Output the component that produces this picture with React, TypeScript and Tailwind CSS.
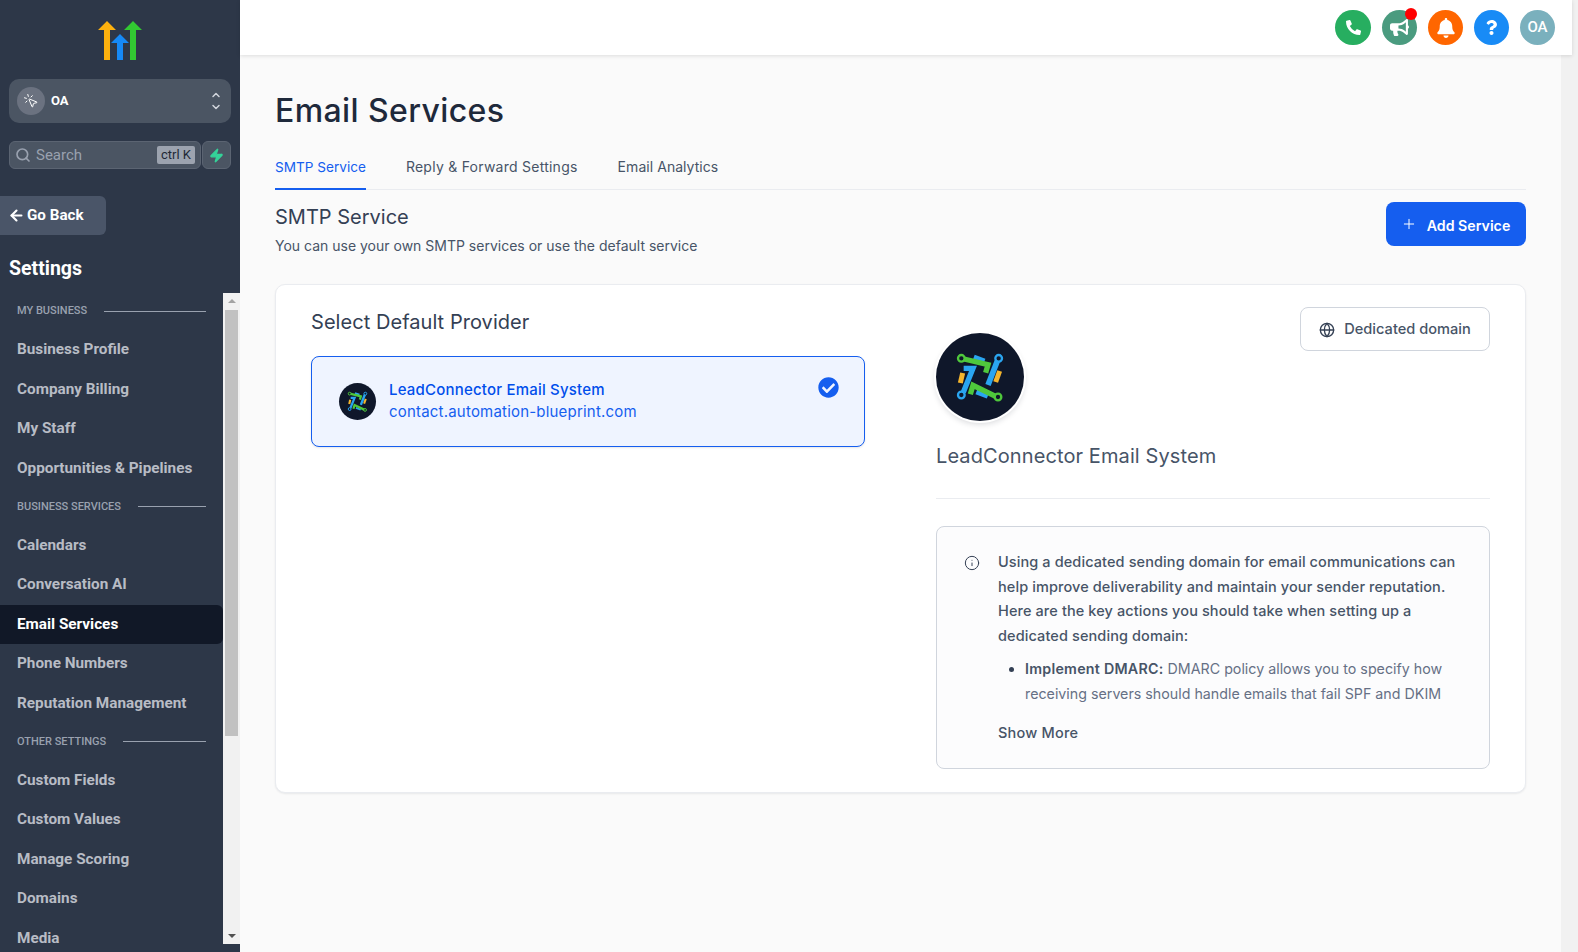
import React from 'react';
import { ArrowLeft, ChevronDown, ChevronUp, Globe, Info, MousePointerClick, Plus, Search, Zap } from 'lucide-react';
import { FaBell, FaBullhorn, FaCheckCircle, FaPhoneAlt, FaQuestion } from 'react-icons/fa';

const sections = [
  { title: 'MY BUSINESS', items: ['Business Profile', 'Company Billing', 'My Staff', 'Opportunities & Pipelines'] },
  { title: 'BUSINESS SERVICES', items: ['Calendars', 'Conversation AI', 'Email Services', 'Phone Numbers', 'Reputation Management'] },
  { title: 'OTHER SETTINGS', items: ['Custom Fields', 'Custom Values', 'Manage Scoring', 'Domains', 'Media'] },
];

function BrandLogo() {
  return (
    <svg width="46" height="42" viewBox="0 0 46 42">
      <path d="M1 10 L10 1 L19 10 H13 V40 H7 V10 Z" fill="#fdb10e" />
      <path d="M14 23 L23 14 L32 23 H26 V40 H20 V23 Z" fill="#1689f5" />
      <path d="M27 10 L36 1 L45 10 H39 V40 H33 V10 Z" fill="#32c832" />
    </svg>
  );
}

function ProviderLogo({ size }: { size: number }) {
  return (
    <svg width={size} height={size} viewBox="49 36 264 264" className="rounded-full bg-[#0f172a]">
      <g fill="none">
        <path d="M129 156 L122 186" stroke="#f5b52c" strokeWidth="15" />
        <path d="M240 150 L228 183" stroke="#f5b52c" strokeWidth="15" />
        <path d="M162 110 L194 122" stroke="#2aa5f0" strokeWidth="18" />
        <path d="M170 213 L204 226" stroke="#2aa5f0" strokeWidth="14" />
        <path d="M233 120 L205 192" stroke="#2aa5f0" strokeWidth="17" />
        <path d="M132 142 L160 142 L131 214" stroke="#2aa5f0" strokeWidth="16" />
        <path d="M133 114 L205 131 L198 155" stroke="#4fc83c" strokeWidth="16" />
        <path d="M228 226 L160 193 L152 220" stroke="#4fc83c" strokeWidth="16" />
        <circle cx="125" cy="112" r="10" stroke="#4fc83c" strokeWidth="7" />
        <circle cx="237" cy="112" r="10" stroke="#2aa5f0" strokeWidth="7" />
        <circle cx="125" cy="222" r="10" stroke="#2aa5f0" strokeWidth="7" />
        <circle cx="235" cy="228" r="10" stroke="#4fc83c" strokeWidth="7" />
      </g>
    </svg>
  );
}

function Sidebar() {
  return (
    <aside className="w-[240px] h-full shrink-0 bg-[#2d3748] flex flex-col font-['Roboto',sans-serif]">
      <div className="h-[79px] shrink-0 flex justify-center pt-[20px]">
        <BrandLogo />
      </div>
      <div className="mx-[9px] h-[44px] shrink-0 rounded-[10px] bg-[#4b5563] flex items-center pl-[8px] pr-[9px]">
        <div className="w-[28px] h-[28px] rounded-full bg-[#6b7280] flex items-center justify-center">
          <MousePointerClick size={16} strokeWidth={1.5} className="text-white" />
        </div>
        <span className="ml-[6px] text-[13px] font-bold text-white flex-1">OA</span>
        <div className="flex flex-col text-gray-300">
          <ChevronUp size={12} strokeWidth={3} />
          <ChevronDown size={12} strokeWidth={3} />
        </div>
      </div>
      <div className="mx-[9px] mt-[18px] h-[28px] shrink-0 flex gap-[1px]">
        <div className="w-[192px] rounded-[6px] bg-[#4b5563] border border-[#5b6472] flex items-center pl-[5px] pr-[5px]">
          <Search size={16} strokeWidth={2.5} className="text-gray-400" />
          <span className="ml-[5px] text-[15px] text-gray-400 flex-1">Search</span>
          <span className="h-[18px] px-[4px] rounded-[2px] bg-[#9ca3af] text-[13px] leading-[18px] text-[#1f2937]">ctrl K</span>
        </div>
        <div className="w-[29px] rounded-[6px] bg-[#4b5563] border border-[#5b6472] flex items-center justify-center">
          <Zap size={15} className="text-[#34d399]" fill="#34d399" />
        </div>
      </div>
      <div className="mt-[27px] w-[106px] h-[39px] shrink-0 rounded-r-[6px] bg-[#4a5568] flex items-center pl-[8px] text-white">
        <ArrowLeft size={17} strokeWidth={3} />
        <span className="ml-[2px] text-[15.2px] font-bold">Go Back</span>
      </div>
      <div className="mt-[19px] ml-[9px] h-[30px] shrink-0 text-[19.5px] font-bold leading-[30px] text-white">Settings</div>
      <div className="mt-[9px] h-[651px] shrink-0 flex overflow-hidden">
        <nav className="w-[223px] shrink-0">
          {sections.map((section, i) => (
            <div key={section.title}>
              <div className={`flex items-center pl-[17px] pr-[17px] gap-[17px] ${i === 0 ? 'h-[37px]' : 'h-[37.6px]'}`}>
                <span className="text-[11px] font-medium text-gray-400 whitespace-nowrap">{section.title}</span>
                <div className="flex-1 h-px bg-gray-400" />
              </div>
              {section.items.map((item) => (
                <div
                  key={item}
                  className={`h-[39.5px] flex items-center pl-[17px] text-[15.3px] font-bold rounded-r-[6px] ${
                    item === 'Email Services' ? 'bg-[#111827] text-white' : 'text-[#b8bcc5]'
                  }`}
                >
                  {item}
                </div>
              ))}
            </div>
          ))}
        </nav>
        <div className="w-[17px] h-full bg-[#f1f1f1] flex flex-col items-center justify-between">
          <div className="w-full flex flex-col items-center">
            <div className="mt-[6px] w-0 h-0 border-x-[4px] border-x-transparent border-b-[4px] border-b-[#a3a3a3]" />
            <div className="mt-[7px] w-[13px] h-[426px] bg-[#c1c1c1]" />
          </div>
          <div className="mb-[6px] w-0 h-0 border-x-[4px] border-x-transparent border-t-[4px] border-t-[#505050]" />
        </div>
      </div>
    </aside>
  );
}

function TopIcon({ className, children }: { className: string; children: React.ReactNode }) {
  return <div className={`relative w-[35px] h-[35px] rounded-full flex items-center justify-center text-white ${className}`}>{children}</div>;
}

function Header() {
  return (
    <header className="relative z-10 h-[55px] w-[1332px] shrink-0 bg-white shadow-[0_1px_4px_rgba(0,0,0,0.12)] flex items-center justify-end pr-[17px] gap-[11px] font-['Roboto',sans-serif]">
      <TopIcon className="w-[36px] bg-[#27ae60]"><FaPhoneAlt size={15} /></TopIcon>
      <TopIcon className="bg-[#4a9b7f]">
        <FaBullhorn size={19} />
        <span className="absolute -top-[2px] right-0 w-[12px] h-[12px] rounded-full bg-[#ff0000]" />
      </TopIcon>
      <TopIcon className="bg-[#ff6600]"><FaBell size={20} /></TopIcon>
      <TopIcon className="bg-[#188bf6]"><FaQuestion size={15} /></TopIcon>
      <TopIcon className="bg-[#7ab0bd] text-[15px] font-medium">OA</TopIcon>
    </header>
  );
}

function Content() {
  return (
    <main className="flex-1 bg-[#fafafa] pl-[35px] pr-[35px] font-['Inter',sans-serif] overflow-hidden">
      <h1 className="mt-[34px] text-[32px] leading-[44px] font-[450] tracking-[0.4px] text-[#1e293b]">Email Services</h1>
      <div className="mt-[13px] h-[44px] flex gap-[40px] border-b border-[#eaecf0] text-[14px] text-[#475467]">
        <div className="h-[44px] pt-[11px] border-b-2 border-[#155eef] text-[#155eef] text-[13.6px]">SMTP Service</div>
        <div className="pt-[10px] tracking-[0.25px]">Reply &amp; Forward Settings</div>
        <div className="pt-[10px] tracking-[0.05px]">Email Analytics</div>
      </div>
      <div className="mt-[12px] h-[44px] flex justify-between">
        <div>
          <div className="mt-[1px] text-[20px] leading-[28px] font-normal text-[#344054]">SMTP Service</div>
          <div className="mt-[5px] text-[14px] leading-[20px] text-[#475467]">You can use your own SMTP services or use the default service</div>
        </div>
        <button className="w-[140px] h-[44px] rounded-[8px] bg-[#155eef] text-white text-[14.2px] font-semibold flex items-center justify-center gap-[10px] pt-[3px] pr-[1px]">
          <Plus size={16} strokeWidth={1.5} className="-mt-[3px]" />
          Add Service
        </button>
      </div>
      <section className="mt-[38px] h-[509px] bg-white rounded-[10px] border border-[#eaecf0] shadow-[0_1px_2px_rgba(16,24,40,0.08)] pl-[35px] pr-[35px] pt-[22px] flex">
        <div className="w-[554px] shrink-0">
          <div className="text-[20px] leading-[30px] text-[#344054] tracking-[0.05px]">Select Default Provider</div>
          <div className="mt-[19px] h-[91px] rounded-[8px] border border-[#155eef] bg-[#eff4ff] shadow-[0_1px_2px_rgba(16,24,40,0.1)] flex pl-[27px] pr-[25px] pt-[22px]">
            <div className="pt-[4px]"><ProviderLogo size={37} /></div>
            <div className="ml-[13px] flex-1 text-[15px] leading-[22px] tracking-[0.2px] text-[#155eef]">
              <div className="font-[450] text-[#004eeb]">LeadConnector Email System</div>
              <div>contact.automation-blueprint.com</div>
            </div>
            <FaCheckCircle size={21} className="text-[#155eef] -mt-[2px]" />
          </div>
        </div>
        <div className="ml-[71px] w-[554px] shrink-0 relative">
          <button className="absolute right-0 top-0 w-[190px] h-[44px] rounded-[8px] border border-[#d0d5dd] bg-white text-[14.6px] font-medium text-[#475467] flex items-center justify-center gap-[9px] pt-[1px]">
            <Globe size={16} className="text-[#344054]" />
            Dedicated domain
          </button>
          <div className="pt-[26px]">
            <div className="w-[88px] h-[88px] rounded-full shadow-[0_3px_6px_rgba(16,24,40,0.18)] ring-2 ring-white">
              <ProviderLogo size={88} />
            </div>
          </div>
          <div className="mt-[20px] pb-[27px] border-b border-[#eaecf0] text-[20px] leading-[30px] tracking-[0.1px] text-[#475467]">LeadConnector Email System</div>
          <div className="mt-[27px] h-[243px] rounded-[8px] border border-[#d0d5dd] bg-[#fcfcfd] pl-[27px] pr-[27px] pt-[23px] flex text-[14.5px] text-[#344054]">
            <Info size={16} strokeWidth={1.5} className="shrink-0 mt-[5px]" />
            <div className="ml-[18px]">
              <p className="leading-[24.7px] font-[450] tracking-[0.1px] text-[#475467]">
                Using a dedicated sending domain for email communications can help improve deliverability and maintain your sender reputation. Here are the key actions you should take when setting up a dedicated sending domain:
              </p>
              <ul className="mt-[7px] ml-[27px] list-disc leading-[25px] text-[14.25px] text-[#667085] marker:text-[#344054]">
                <li><span className="font-semibold tracking-[0.25px] text-[#475467]">Implement DMARC:</span> DMARC policy allows you to specify how receiving servers should handle emails that fail SPF and DKIM</li>
              </ul>
              <div className="mt-[16px] font-medium tracking-[0.2px] text-[#475467]">Show More</div>
            </div>
          </div>
        </div>
      </section>
    </main>
  );
}

export default function App() {
  return (
    <div className="w-[1578px] h-[952px] flex overflow-hidden bg-[#f1f1f1]">
      <Sidebar />
      <div className="flex-1 min-w-0 flex flex-col">
        <Header />
        <div className="flex-1 flex min-h-0">
          <Content />
          <div className="w-[17px] shrink-0 bg-[#f1f1f1]" />
        </div>
      </div>
    </div>
  );
}
